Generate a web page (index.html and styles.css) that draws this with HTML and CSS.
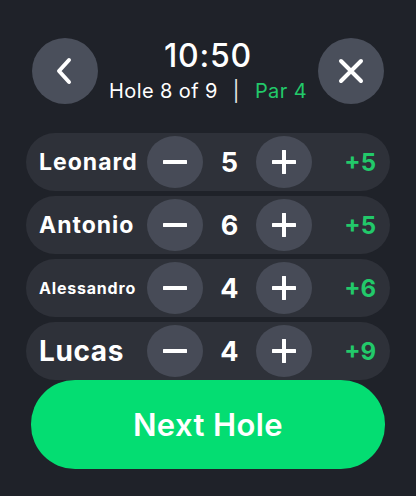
FILE: index.html
```html
<!DOCTYPE html>
<html lang="en">
<head>
  <meta charset="UTF-8" />
  <meta name="viewport" content="width=device-width, initial-scale=1.0" />
  <title>Scorecard</title>
  <link rel="stylesheet" href="styles.css">
</head>
<body>
  <div class="screen">
    <header class="top">
      <button class="round-btn" aria-label="Back">
        <svg width="24" height="28" viewBox="0 0 24 28"><path d="M16 3 L6 14 L16 25" fill="none" stroke="#fff" stroke-width="4" stroke-linecap="round" stroke-linejoin="round"/></svg>
      </button>
      <div class="title">
        <div class="clock">10:50</div>
        <div class="hole">Hole 8 of 9 <span class="sep">|</span> <span class="par">Par 4</span></div>
      </div>
      <button class="round-btn" aria-label="Close">
        <svg width="26" height="26" viewBox="0 0 26 26"><path d="M3 3 L23 23 M23 3 L3 23" fill="none" stroke="#fff" stroke-width="4" stroke-linecap="round"/></svg>
      </button>
    </header>

    <div class="players">
      <div class="player">
        <span class="name">Leonard</span>
        <button class="step"><svg width="24" height="24" viewBox="0 0 24 24"><path d="M1 12 H23" stroke="#fff" stroke-width="4" stroke-linecap="round"/></svg></button>
        <span class="score">5</span>
        <button class="step"><svg width="24" height="24" viewBox="0 0 24 24"><path d="M1 12 H23 M12 1 V23" stroke="#fff" stroke-width="4" stroke-linecap="round"/></svg></button>
        <span class="total">+5</span>
      </div>
      <div class="player">
        <span class="name">Antonio</span>
        <button class="step"><svg width="24" height="24" viewBox="0 0 24 24"><path d="M1 12 H23" stroke="#fff" stroke-width="4" stroke-linecap="round"/></svg></button>
        <span class="score">6</span>
        <button class="step"><svg width="24" height="24" viewBox="0 0 24 24"><path d="M1 12 H23 M12 1 V23" stroke="#fff" stroke-width="4" stroke-linecap="round"/></svg></button>
        <span class="total">+5</span>
      </div>
      <div class="player">
        <span class="name name-sm">Alessandro</span>
        <button class="step"><svg width="24" height="24" viewBox="0 0 24 24"><path d="M1 12 H23" stroke="#fff" stroke-width="4" stroke-linecap="round"/></svg></button>
        <span class="score">4</span>
        <button class="step"><svg width="24" height="24" viewBox="0 0 24 24"><path d="M1 12 H23 M12 1 V23" stroke="#fff" stroke-width="4" stroke-linecap="round"/></svg></button>
        <span class="total">+6</span>
      </div>
      <div class="player">
        <span class="name name-lg">Lucas</span>
        <button class="step"><svg width="24" height="24" viewBox="0 0 24 24"><path d="M1 12 H23" stroke="#fff" stroke-width="4" stroke-linecap="round"/></svg></button>
        <span class="score">4</span>
        <button class="step"><svg width="24" height="24" viewBox="0 0 24 24"><path d="M1 12 H23 M12 1 V23" stroke="#fff" stroke-width="4" stroke-linecap="round"/></svg></button>
        <span class="total">+9</span>
      </div>
    </div>

    <button class="next">Next Hole</button>
  </div>
</body>
</html>
```

FILE: styles.css
```css
* {
  box-sizing: border-box;
}
body {
  margin: 0;
  padding: 0;
  background: #1f2229;
  font-family: 'Inter', 'Roboto', sans-serif;
  color: #fff;
}
button {
  font-family: inherit;
  border: none;
  padding: 0;
  cursor: pointer;
  color: #fff;
}
.screen {
  width: 416px;
  height: 496px;
  padding: 38px 0 0;
  display: flex;
  flex-direction: column;
  align-items: center;
}
.top {
  width: 352px;
  display: flex;
  justify-content: space-between;
  align-items: center;
}
.round-btn {
  width: 66px;
  height: 66px;
  border-radius: 50%;
  background: #4a4f5b;
  display: flex;
  justify-content: center;
  align-items: center;
}
.title {
  text-align: center;
}
.clock {
  font-size: 32px;
  font-weight: 500;
  line-height: 32px;
  letter-spacing: 0.8px;
}
.hole {
  margin-top: 8px;
  font-size: 20px;
  line-height: 22px;
  letter-spacing: 0.4px;
}
.sep {
  margin: 0 9px;
  color: #e8e8ea;
}
.par {
  color: #22c96a;
}
.players {
  width: 364px;
  margin-top: 29px;
  display: flex;
  flex-direction: column;
  gap: 5px;
}
.player {
  height: 58px;
  border-radius: 29px;
  background: #2e3139;
  display: grid;
  grid-template-columns: 108px 56px 53px 56px 1fr;
  align-items: center;
  padding: 0 14px 0 13px;
}
.name {
  font-size: 23px;
  font-weight: 700;
  letter-spacing: 1px;
  white-space: nowrap;
}
.name-sm {
  font-size: 16px;
  letter-spacing: 0.8px;
}
.name-lg {
  font-size: 28px;
  letter-spacing: 0.6px;
}
.step {
  width: 56px;
  height: 52px;
  border-radius: 50%;
  background: #474b57;
  display: flex;
  justify-content: center;
  align-items: center;
}
.score {
  text-align: center;
  font-size: 27px;
  font-weight: 700;
}
.total {
  text-align: right;
  font-size: 24px;
  font-weight: 700;
  color: #22c96a;
}
.next {
  margin-top: 0;
  width: 354px;
  height: 89px;
  border-radius: 44px;
  background: #04dd72;
  font-size: 31px;
  font-weight: 600;
  letter-spacing: 0.4px;
}
```
